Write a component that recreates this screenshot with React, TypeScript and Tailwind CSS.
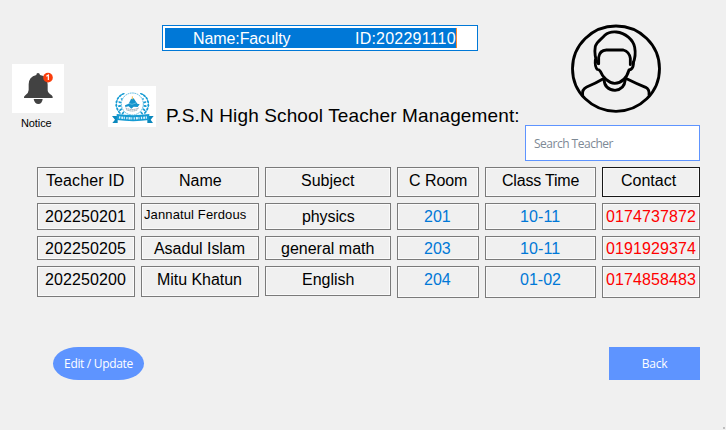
import React from "react";

type Cell = { text: string; cls: string };

const sans = "font-['Liberation_Sans',Arial,sans-serif]";
const ui = "font-['Open_Sans','Noto_Sans',sans-serif]";

const columns: { width: string; cells: Cell[] }[] = [
  {
    width: "w-[98px]",
    cells: [
      { text: "Teacher ID", cls: "h-[30px] pl-[8px] pt-[3px] text-[16px] tracking-[0.1px]" },
      { text: "202250201", cls: "h-[27px] pl-[7px] pt-[3px] text-[16px] tracking-[0.1px]" },
      { text: "202250205", cls: "h-[24px] pl-[7px] pt-[2px] text-[16px] tracking-[0.1px]" },
      { text: "202250200", cls: "h-[31px] pl-[7px] pt-[3px] text-[16px] tracking-[0.1px]" },
    ],
  },
  {
    width: "w-[118px]",
    cells: [
      { text: "Name", cls: "h-[30px] pl-[37px] pt-[3px] text-[16px]" },
      { text: "Jannatul Ferdous", cls: "h-[27px] pl-[2px] pt-px text-[13px] tracking-[0.12px]" },
      { text: "Asadul Islam", cls: "h-[24px] pl-[12px] pt-[2px] text-[16px] tracking-[-0.05px]" },
      { text: "Mitu Khatun", cls: "h-[31px] pl-[15px] pt-[3px] text-[16px] tracking-[-0.05px]" },
    ],
  },
  {
    width: "w-[126px]",
    cells: [
      { text: "Subject", cls: "h-[30px] pl-[35px] pt-[3px] text-[16px]" },
      { text: "physics", cls: "h-[27px] pl-[36px] pt-[3px] text-[16px] tracking-[-0.1px]" },
      { text: "general math", cls: "h-[24px] pl-[15px] pt-[2px] text-[16px]" },
      { text: "English", cls: "h-[30px] pl-[36px] pt-[3px] text-[16px]" },
    ],
  },
  {
    width: "w-[82px]",
    cells: [
      { text: "C Room", cls: "h-[30px] pl-[11px] pt-[3px] text-[16px] tracking-[-0.05px]" },
      { text: "201", cls: "h-[27px] pl-[26px] pt-[3px] text-[16px] text-[#0078d7]" },
      { text: "203", cls: "h-[24px] pl-[26px] pt-[2px] text-[16px] text-[#0078d7]" },
      { text: "204", cls: "h-[32px] pl-[26px] pt-[3px] text-[16px] text-[#0078d7]" },
    ],
  },
  {
    width: "w-[111px]",
    cells: [
      { text: "Class Time", cls: "h-[30px] pl-[16px] pt-[3px] text-[16px] tracking-[-0.2px]" },
      { text: "10-11", cls: "h-[27px] pl-[34px] pt-[3px] text-[16px] tracking-[0.1px] text-[#0078d7]" },
      { text: "10-11", cls: "h-[24px] pl-[34px] pt-[2px] text-[16px] tracking-[0.1px] text-[#0078d7]" },
      { text: "01-02", cls: "h-[32px] pl-[34px] pt-[3px] text-[16px] text-[#0078d7]" },
    ],
  },
  {
    width: "w-[98px]",
    cells: [
      { text: "Contact", cls: "h-[30px] pl-[18px] pt-[3px] text-[16px]" },
      { text: "0174737872", cls: "h-[27px] pl-[3px] pt-[3px] text-[16px] text-[#ff0000] tracking-[0.1px]" },
      { text: "0191929374", cls: "h-[24px] pl-[3px] pt-[2px] text-[16px] text-[#ff0000] tracking-[0.1px]" },
      { text: "0174858483", cls: "h-[32px] pl-[3px] pt-[3px] text-[16px] text-[#ff0000] tracking-[0.1px]" },
    ],
  },
];

function Bell() {
  return (
    <svg width="52" height="49" viewBox="12 12 156 147" className="block bg-white">
      <path d="M85 45q0-6 5-6t6 6q23 4 23 29v17q0 7 12 15 4 3 3 8H48q-1-5 4-8 10-7 10-16V73q0-22 23-28Z" fill="#424242" />
      <path d="M77 117h27q-2 15-13 15t-14-15Z" fill="#424242" />
      <circle cx="120" cy="53" r="14.5" fill="#fa3e0c" />
      <path d="M115 49l6-4v15" stroke="#fff" strokeWidth="3.5" fill="none" />
    </svg>
  );
}

const leaves = [
  [61, 47, -35], [54, 55, -55], [50, 65, -70], [49, 76, -90], [52, 87, -115], [58, 97, -135],
  [67, 58, 25], [60, 67, 15], [59, 78, -10], [62, 89, -35], [69, 99, -50], [69, 42, -20],
];

function Crest() {
  return (
    <svg width="48" height="41" viewBox="24 18 144 123" className="block bg-white">
      <g fill="#159bd3">
        {leaves.map(([x, y, a]) => (
          <g key={`${x}-${y}`}>
            <ellipse cx={x} cy={y} rx="5.5" ry="2.7" transform={`rotate(${a} ${x} ${y})`} />
            <ellipse cx={194 - x} cy={y} rx="5.5" ry="2.7" transform={`rotate(${-a} ${194 - x} ${y})`} />
          </g>
        ))}
      </g>
      <circle cx="97" cy="72" r="33" fill="#fff" stroke="#56b8df" strokeWidth="3" strokeDasharray="5 2" />
      <path d="M75 76l11-5 7-14 8-2 11 16 7 2-6 8-12-1-7 6-8-7-10 2Z" fill="#1594cc" />
      <path d="M97 49v9" stroke="#f2c34c" strokeWidth="3" />
      <path d="M87 70l9 3 12-4" fill="none" stroke="#7accea" strokeWidth="2" />
      <path d="M77 84q20 9 39 0M79 89q18 8 34 0" fill="none" stroke="#8b9daa" strokeWidth="3" strokeDasharray="4 2" />
      <path d="M36 108h17v21H37l8-10ZM161 108h-19v21h17l-7-10Z" fill="#0b88bd" />
      <path d="M50 102q48 7 98 0v18q-48 7-98 0Z" fill="#159bd3" />
      <path d="M57 112q40 6 84 0" fill="none" stroke="#d9f1fa" strokeWidth="7" strokeDasharray="4 3 6 2 3 4" />
    </svg>
  );
}

function Avatar() {
  return (
    <svg width="110" height="105" viewBox="0 0 330 315" className="block" fill="none" stroke="#000" strokeWidth="8.5" strokeLinejoin="round" strokeLinecap="round">
      <ellipse cx="168" cy="161" rx="130.5" ry="128" />
      <path d="M115 146C105 135 103 110 106 94C110 80 124 73 134 61Q148 49 169 51C196 53 220 75 224 97C227 113 225 132 219 146" />
      <path d="M116 146V127Q119 106 139 105H190Q208 110 211 130V149" />
      <path d="M106 135C105 146 106 158 112 163Q118 163 121 169C127 186 146 204 164 205C184 204 200 189 207 165Q219 163 220 149V142" />
      <path d="M132 194Q134 224 165 226Q193 224 196 194" />
      <path d="M130 191Q108 204 80 216Q65 223 68 241M200 191Q228 205 257 217Q269 223 267 239" />
    </svg>
  );
}

export default function App() {
  return (
    <main className={`flex h-[430px] w-[726px] flex-col overflow-hidden bg-[#f0f0f0] text-black ${sans}`}>
      <header className="flex h-[167px] pl-[12px]">
        <div className="w-[52px] pt-[64px]">
          <Bell />
          <p className="mt-[3px] pl-[9px] text-[11px] leading-[14px] tracking-[-0.1px]">Notice</p>
        </div>

        <div className="ml-[44px] w-[417px] pt-[25px]">
          <div className="ml-[54px] h-[26px] w-[316px] border border-[#0078d7] bg-white p-[2px]">
            <div className="flex h-[20px] w-[292px] border-r border-[#ff8728] bg-[#0078d7] pl-[28px] text-[16px] leading-[21px] whitespace-pre text-white">
              <span className="w-[162px] tracking-[-0.1px]">Name:Faculty</span>
              <span className="tracking-[0.22px]">ID:202291110</span>
            </div>
          </div>
          <div className="mt-[35px] flex">
            <Crest />
            <h1 className="ml-[10px] pt-[19px] text-[19px] leading-[22px] whitespace-nowrap tracking-[0.13px]">
              P.S.N High School Teacher Management:
            </h1>
          </div>
        </div>

        <div className="w-[175px] pt-[15px]">
          <div className="ml-[35px]">
            <Avatar />
          </div>
          <input
            placeholder="Search Teacher"
            className={`mt-[5px] block h-[36px] w-[175px] rounded-none border border-[#5e94ff] bg-white pl-[8px] text-[12px] tracking-[-0.5px] text-black outline-none placeholder:text-[#7d8995] ${ui}`}
          />
        </div>
      </header>

      <section className="flex h-[180px] gap-[6px] pl-[37px]">
        {columns.map((column) => (
          <div key={column.cells[0].text} className={`flex flex-col gap-[6px] ${column.width}`}>
            {column.cells.map((cell, i) => (
              <div
                key={i}
                className={`border leading-[20px]! whitespace-nowrap shadow-[inset_0_0_0_1px_#fafafa] ${cell.text === "Contact" ? "border-[#171717]" : "border-[#7a7a7a]"} ${cell.cls}`}
              >
                {cell.text}
              </div>
            ))}
          </div>
        ))}
      </section>

      <footer className={`flex h-[33px] justify-between pr-[26px] pl-[53px] text-[12px] leading-[33px] text-white ${ui}`}>
        <button className="h-[33px] w-[91px] rounded-[26px/17px] bg-[#5e94ff] tracking-[-0.32px] whitespace-nowrap">Edit / Update</button>
        <button className="h-[33px] w-[91px] bg-[#5e94ff] tracking-[-0.3px]">Back</button>
      </footer>

      <div className="mt-auto mr-[1px] mb-[1px] size-[2px] self-end bg-[#bfbfbf]" />
    </main>
  );
}
